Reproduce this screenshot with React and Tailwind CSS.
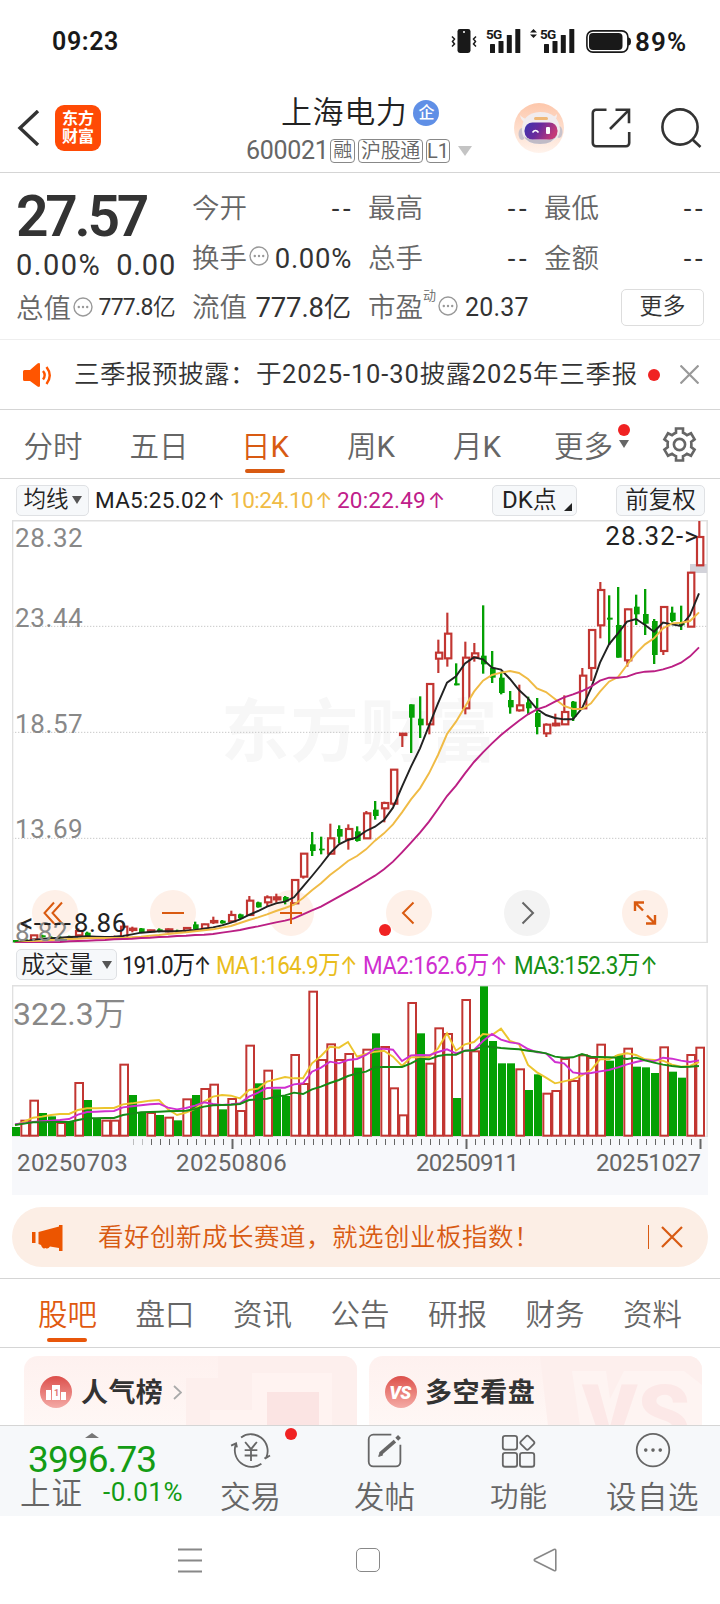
// src/pages/StockDetail.jsx
import { useState } from 'react';
import clsx from 'clsx';

const RED = '#c23632';
const GREEN = '#04a004';

// [dir, high, low, bodyTop, bodyBottom] -- y values in chart units
const CANDLES = [
  ['g', 1275, 1282, 1275, 1282], ['g', 1272, 1278, 1272, 1278], ['r', 1261, 1273, 1261, 1273], ['g', 1259, 1268, 1261, 1267],
  ['g', 1264, 1272, 1266, 1271], ['g', 1264, 1271, 1266, 1270], ['g', 1262, 1270, 1264, 1268], ['r', 1240, 1261, 1248, 1261],
  ['g', 1250, 1266, 1253, 1263], ['g', 1264, 1271, 1266, 1270], ['g', 1264, 1272, 1267, 1271], ['r', 1262, 1273, 1266, 1270],
  ['r', 1223, 1273, 1235, 1270], ['r', 1235, 1252, 1241, 1245], ['g', 1239, 1254, 1240, 1252], ['r', 1244, 1252, 1246, 1249],
  ['g', 1240, 1252, 1243, 1249], ['r', 1240, 1252, 1243, 1249], ['g', 1244, 1252, 1247, 1251], ['r', 1236, 1249, 1239, 1247],
  ['g', 1220, 1244, 1228, 1243], ['r', 1226, 1243, 1228, 1241], ['r', 1205, 1227, 1218, 1222], ['g', 1215, 1226, 1217, 1225],
  ['r', 1187, 1222, 1200, 1219], ['g', 1196, 1212, 1198, 1210], ['r', 1143, 1202, 1157, 1200], ['g', 1160, 1178, 1162, 1177],
  ['r', 1141, 1173, 1147, 1162], ['r', 1136, 1163, 1147, 1153], ['g', 1143, 1168, 1146, 1160], ['r', 1092, 1167, 1095, 1165],
  ['r', 1014, 1091, 1016, 1085], ['g', 951, 1023, 988, 1008], ['g', 965, 1018, 1001, 1005], ['r', 926, 1018, 970, 1016],
  ['g', 931, 985, 942, 965], ['r', 928, 1004, 942, 972], ['g', 934, 980, 949, 978], ['r', 888, 972, 895, 970],
  ['g', 858, 914, 884, 903], ['r', 860, 922, 864, 880], ['r', 762, 872, 764, 866], ['r', 656, 696, 656, 660],
  ['g', 568, 714, 568, 608], ['g', 544, 669, 611, 631], ['r', 505, 658, 507, 628], ['r', 374, 474, 413, 431],
  ['r', 293, 455, 356, 430], ['g', 445, 511, 505, 511], ['r', 380, 598, 428, 580], ['r', 384, 440, 415, 427],
  ['g', 271, 476, 422, 448], ['g', 408, 504, 458, 488], ['g', 470, 538, 488, 534], ['g', 528, 596, 555, 577],
  ['r', 509, 590, 571, 586], ['g', 545, 600, 562, 580], ['g', 549, 658, 594, 636], ['r', 625, 666, 629, 655],
  ['r', 596, 634, 626, 631], ['r', 541, 630, 591, 628], ['g', 558, 618, 560, 605], ['r', 459, 582, 482, 580],
  ['r', 343, 498, 345, 459], ['r', 201, 370, 225, 331], ['g', 241, 390, 308, 314], ['g', 216, 428, 330, 428],
  ['r', 281, 455, 283, 436], ['g', 239, 330, 275, 298], ['g', 222, 360, 297, 326], ['g', 312, 447, 318, 420],
  ['r', 275, 420, 276, 408], ['g', 275, 322, 293, 318], ['g', 272, 345, 325, 331], ['r', 172, 336, 173, 335],
  ['r', 18, 152, 66, 151],
];

const MA5 = [1283, 1279, 1275, 1272, 1270, 1268, 1266, 1265, 1264, 1265, 1266, 1265, 1263, 1258, 1253, 1251, 1249, 1249, 1249, 1247, 1245, 1241, 1237, 1231, 1223, 1213, 1200, 1188, 1175, 1165, 1160, 1147, 1115, 1083, 1050, 1015, 988, 975, 967, 948, 935, 915, 878, 815, 755, 700, 632, 565, 503, 484, 445, 427, 433, 458, 464, 492, 525, 550, 582, 600, 609, 613, 613, 580, 520, 443, 388, 355, 320, 312, 330, 350, 323, 328, 333, 300, 235];
const MA10 = [1284, 1282, 1280, 1278, 1275, 1274, 1272, 1271, 1269, 1269, 1269, 1269, 1269, 1267, 1265, 1262, 1260, 1257, 1254, 1252, 1249, 1246, 1243, 1238, 1233, 1224, 1215, 1207, 1198, 1188, 1179, 1169, 1149, 1126, 1105, 1080, 1060, 1038, 1023, 1003, 977, 955, 928, 892, 853, 820, 775, 720, 657, 620, 575, 530, 497, 480, 473, 468, 474, 492, 520, 531, 552, 573, 582, 582, 565, 530, 500, 486, 450, 415, 388, 370, 340, 325, 323, 318, 292];
const MA20 = [1285, 1284, 1284, 1283, 1282, 1281, 1279, 1278, 1277, 1276, 1275, 1273, 1272, 1271, 1269, 1268, 1266, 1265, 1263, 1262, 1260, 1259, 1257, 1253, 1249, 1245, 1239, 1234, 1228, 1222, 1217, 1210, 1198, 1186, 1175, 1160, 1145, 1130, 1115, 1098, 1082, 1063, 1040, 1012, 983, 953, 920, 882, 843, 812, 775, 741, 712, 685, 660, 638, 617, 598, 583, 574, 560, 547, 538, 528, 515, 497, 488, 488, 485, 475, 470, 469, 463, 455, 443, 424, 397];

// volume bar tops, same order as CANDLES
const VOLUME = [
  ['g', 561], ['r', 541], ['r', 481], ['g', 519], ['g', 529], ['r', 548], ['g', 545], ['r', 428], ['g', 480], ['g', 535],
  ['r', 541], ['r', 541], ['r', 373], ['g', 465], ['g', 517], ['r', 518], ['g', 525], ['r', 532], ['g', 541], ['r', 477],
  ['g', 465], ['r', 446], ['r', 433], ['g', 508], ['r', 476], ['r', 512], ['r', 316], ['g', 430], ['r', 391], ['g', 448],
  ['g', 468], ['r', 344], ['r', 431], ['r', 154], ['r', 359], ['r', 312], ['r', 359], ['r', 341], ['g', 383], ['r', 328],
  ['g', 280], ['r', 320], ['r', 444], ['r', 525], ['r', 188], ['g', 280], ['r', 370], ['r', 264], ['r', 281], ['g', 474],
  ['r', 179], ['r', 333], ['g', 139], ['g', 303], ['g', 370], ['g', 370], ['r', 387], ['g', 450], ['g', 403], ['r', 460],
  ['r', 452], ['r', 356], ['r', 422], ['r', 345], ['r', 353], ['r', 313], ['g', 362], ['g', 345], ['r', 325], ['g', 380],
  ['g', 382], ['g', 399], ['r', 321], ['g', 395], ['g', 413], ['r', 344], ['r', 322],
];

const VMA1 = [556, 545, 533, 530, 525, 522, 522, 510, 505, 505, 504, 504, 493, 490, 486, 482, 480, 508, 525, 518, 507, 485, 470, 465, 467, 475, 450, 446, 425, 418, 411, 415, 415, 370, 348, 320, 323, 306, 350, 342, 335, 332, 350, 378, 352, 352, 352, 325, 280, 332, 313, 306, 282, 285, 266, 303, 312, 375, 397, 413, 430, 424, 418, 406, 390, 358, 358, 345, 340, 345, 358, 360, 362, 374, 380, 378, 366];
const VMA2 = [553, 550, 546, 544, 542, 540, 537, 524, 516, 515, 514, 513, 502, 499, 496, 493, 491, 503, 508, 504, 497, 487, 492, 495, 493, 490, 470, 458, 444, 443, 443, 433, 430, 395, 383, 365, 370, 360, 357, 345, 326, 326, 329, 363, 346, 345, 346, 336, 328, 340, 332, 330, 303, 282, 299, 307, 311, 327, 337, 340, 366, 370, 397, 401, 399, 394, 390, 382, 373, 366, 360, 364, 353, 356, 362, 366, 361];
const VMA3 = [555, 551, 547, 547, 546, 546, 546, 540, 535, 535, 534, 534, 525, 521, 517, 516, 515, 514, 513, 512, 507, 500, 496, 495, 494, 492, 480, 478, 476, 470, 466, 458, 462, 448, 440, 429, 420, 408, 400, 395, 382, 381, 381, 381, 370, 356, 358, 348, 344, 344, 332, 331, 318, 321, 324, 326, 328, 332, 335, 340, 350, 353, 352, 342, 350, 351, 352, 353, 357, 353, 361, 368, 374, 378, 381, 380, 378];

const toPoints = (values) => values.map((y, i) => `${9 + 27 * i},${y}`).join(' ');

const QUOTES = [
  { label: '今开', value: '--' },
  { label: '最高', value: '--' },
  { label: '最低', value: '--' },
  { label: '换手', value: '0.00%', tip: true },
  { label: '总手', value: '--' },
  { label: '金额', value: '--' },
];

const PERIODS = ['分时', '五日', '日K', '周K', '月K'];
const SECTIONS = ['股吧', '盘口', '资讯', '公告', '研报', '财务', '资料'];

function MoreDot() {
  return (
    <svg className="h-5 w-5 shrink-0" viewBox="0 0 20 20" fill="none">
      <circle cx="10" cy="10" r="9" stroke="#999" strokeWidth="1.4" />
      <circle cx="5.8" cy="10" r="1.2" fill="#999" />
      <circle cx="10" cy="10" r="1.2" fill="#999" />
      <circle cx="14.2" cy="10" r="1.2" fill="#999" />
    </svg>
  );
}

function Up() {
  return <span className="inline-flex w-[19px] justify-center font-[Inter] text-[21px]">↑</span>;
}

function Signal({ data }) {
  return (
    <div className="relative h-6 w-[36px]">
      {data && (
        <svg className="absolute -left-[10px] top-[0px] h-[9px] w-[7px]" viewBox="0 0 7 9" fill="#191919">
          <path d="M3.5 0 7 3.6H0zM3.5 9 0 5.4h7z" />
        </svg>
      )}
      <span className="absolute -top-[1px] left-0 text-[13.5px] leading-[13px] font-bold tracking-[-0.8px]">5G</span>
      <svg className="absolute top-0 left-0 h-6 w-[36px]" viewBox="0 0 36 24" fill="#191919">
        <rect x="4" y="15" width="5" height="9" rx="0.6" />
        <rect x="12.5" y="12" width="5" height="12" rx="0.6" />
        <rect x="20.8" y="6" width="5" height="18" rx="0.6" />
        <rect x="29.3" y="0" width="5" height="24" rx="0.6" />
      </svg>
    </div>
  );
}

function StatusBar() {
  return (
    <div className="flex h-[82px] items-center pl-[52px] text-[#191919]">
      <span className="mt-[2px] w-[399px] text-[25px] font-semibold tracking-[0.6px]">09:23</span>
      <svg className="h-6 w-[26px]" viewBox="0 0 26 24" fill="#191919">
        <rect x="6.5" y="0" width="13" height="24" rx="2.4" />
        <circle cx="13" cy="3" r="1" fill="#fff" />
        <path d="M1 7.5 3.5 10 1.5 12.5 3.5 15 1 17.5M25 7.5 22.5 10l2 2.5-2 2.5 2.5 2.5" fill="none" stroke="#191919" strokeWidth="1.5" />
      </svg>
      <div className="ml-[9px]"><Signal /></div>
      <div className="ml-[18px]"><Signal data /></div>
      <svg className="mt-[1px] ml-[10px] h-[23px] w-[45px]" viewBox="0 0 45 23">
        <rect x="0.9" y="0.9" width="41" height="21.2" rx="6" fill="none" stroke="#191919" strokeWidth="1.6" />
        <rect x="3" y="3" width="33.5" height="17" rx="4" fill="#191919" />
        <path d="M42 7.5q3 0 3 4t-3 4z" fill="#191919" />
      </svg>
      <span className="mt-[3px] ml-[4px] text-[26px] font-semibold tracking-[1.2px]">89%</span>
    </div>
  );
}

function Robot() {
  return (
    <svg className="h-[50px] w-[50px]" viewBox="0 0 50 50">
      <defs>
        <linearGradient id="halo" x1="0" y1="0" x2="0" y2="1">
          <stop offset="0" stopColor="#fdc7ab" />
          <stop offset="1" stopColor="#fff3ec" />
        </linearGradient>
        <linearGradient id="visor" x1="0" y1="0" x2="1" y2="0.3">
          <stop offset="0" stopColor="#3a35b0" />
          <stop offset="0.5" stopColor="#6a2b9c" />
          <stop offset="1" stopColor="#c33a78" />
        </linearGradient>
      </defs>
      <circle cx="25" cy="25" r="25" fill="url(#halo)" />
      <ellipse cx="8" cy="31" rx="3.5" ry="6" fill="#c9c3cc" />
      <ellipse cx="45" cy="29" rx="3.5" ry="6" fill="#c9c3cc" />
      <path d="M6 12q1 6 6 8l4-4q-6 1-10-4zM43 11q0 6-5 8l-4-4q5 1 9-4z" fill="#f4eeee" />
      <path d="M8 27Q8 10 26 9q18 0 20 17 0 14-20 15Q8 41 8 27z" fill="#f1ecee" />
      <path d="M9 32q4 9 17 9t18-10q-4 6-18 6T9 32z" fill="#c0bbc6" />
      <rect x="20" y="14" width="14" height="3" rx="1.5" fill="#efb877" />
      <rect x="10.5" y="19.5" width="33" height="17" rx="8" fill="url(#visor)" />
      <path d="M18.5 29.5q3-4 6 0" fill="none" stroke="#fff" strokeWidth="1.6" />
      <rect x="32" y="24" width="4" height="7" rx="1" fill="#fff" />
    </svg>
  );
}

function Header() {
  return (
    <div className="flex h-[91px] items-start border-b border-[#d5d5d5]">
      <svg className="mt-[28px] ml-[17px] h-9 w-[23px]" viewBox="0 0 23 36" fill="none" stroke="#333" strokeWidth="3.4">
        <path d="M21 1 3 18 21 35" />
      </svg>
      <div className="mt-[23px] ml-[15px] flex h-[46px] w-[46px] flex-col items-center justify-center rounded-[9px] bg-[#ff4a05] text-[16px] leading-[18px] font-bold text-white">
        <span>东方</span>
        <span>财富</span>
      </div>
      <div className="ml-[145px] flex w-[228px] flex-col pt-[11px]">
        <div className="flex h-[40px] items-center pl-[35px]">
          <span className="text-[31px] tracking-[0.6px] text-[#222]">上海电力</span>
          <span className="-mt-[1px] ml-[6px] flex h-[26px] w-[26px] items-center justify-center rounded-full bg-[#5f8fe6] text-[16px] font-medium text-white">企</span>
        </div>
        <div className="flex h-[36px] items-center text-[#666]">
          <span className="w-[83px] text-[25px] font-normal tracking-[-0.3px]">600021</span>
          <span className="ml-[1px] flex h-[24px] w-[25px] shrink-0 items-center justify-center rounded-[4px] border border-[#888] text-[19px] tracking-[-0.3px]">融</span>
          <span className="ml-[3px] flex h-[24px] w-[65px] shrink-0 items-center justify-center rounded-[4px] border border-[#888] text-[20px] tracking-[-0.3px]">沪股通</span>
          <span className="ml-[3px] flex h-[24px] w-[24px] shrink-0 items-center justify-center rounded-[4px] border border-[#888] text-[20px] font-normal">L1</span>
          <span className="ml-[8px] border-x-[7.5px] border-t-[10px] border-x-transparent border-t-[#c4c4c4]"></span>
        </div>
      </div>
      <div className="mt-[21px] ml-[40px]"><Robot /></div>
      <svg className="mt-[26px] ml-[27px] h-[40px] w-[40px]" viewBox="0 0 40 40" fill="none" stroke="#333" strokeWidth="2.6">
        <path d="M15.5 1.8H5a3.2 3.2 0 0 0-3.2 3.2v30a3.2 3.2 0 0 0 3.2 3.2h30a3.2 3.2 0 0 0 3.2-3.2V24M24.5 1.8h13.5v13.5M37.5 2.3 19 21" />
      </svg>
      <svg className="mt-[26px] ml-[30px] h-[40px] w-[42px]" viewBox="0 0 42 40" fill="none" stroke="#333" strokeWidth="2.6">
        <circle cx="19" cy="19" r="17.6" />
        <path d="M31.5 31.5 39.5 39" />
      </svg>
    </div>
  );
}

function Quote() {
  return (
    <div className="flex h-[167px] border-b border-[#eee] pl-[16px] text-[#333]">
      <div className="flex w-[176px] flex-col">
        <span className="mt-[11px] h-[64px] text-[57px] leading-[66px] font-semibold tracking-[-3.3px]">27.57</span>
        <div className="-mt-[1px] flex h-[38px] w-[160px] items-center justify-between text-[29px] font-normal">
          <span className="tracking-[1.5px]">0.00%</span>
          <span className="tracking-[0.8px]">0.00</span>
        </div>
        <div className="mt-[4px] flex h-[39px] w-[159px] items-center">
          <span className="text-[27.5px] text-[#666]">总值</span>
          <span className="-mt-1 ml-[2px]"><MoreDot /></span>
          <span className="ml-auto text-[23px] tracking-[-0.7px]"><span className="font-normal">777.8</span>亿</span>
        </div>
      </div>
      <div>
        <div className="grid grid-cols-[158px_158px_158px] gap-x-[18px] pt-[11px]">
          {QUOTES.map((q) => (
            <div key={q.label} className="flex h-[49.5px] items-center text-[27.5px]">
              <span className="text-[#666]">{q.label}</span>
              {q.tip && <span className="-mt-1 ml-[2px]"><MoreDot /></span>}
              <span className={clsx('ml-auto font-normal', q.value === '--' ? 'tracking-[3.5px] -mr-1' : '-mr-[2px] tracking-[0.7px]')}>{q.value}</span>
            </div>
          ))}
        </div>
        <div className="flex h-[49px] items-center text-[27.5px]">
          <div className="flex w-[159px] items-center justify-between">
            <span className="text-[#666]">流值</span>
            <span className="tracking-[-0.2px]"><span className="font-normal">777.8</span>亿</span>
          </div>
          <span className="ml-[17px] text-[#666]">市盈</span>
          <span className="-mt-[24px] text-[13px] text-[#666]">动</span>
          <span className="-mt-1 ml-[2px]"><MoreDot /></span>
          <span className="ml-[7px] text-[25px] font-normal tracking-[0.2px]">20.37</span>
          <button className="-mr-[2px] ml-auto h-[37px] w-[83px] rounded-[5px] border border-[#ddd] text-[23px]">更多</button>
        </div>
      </div>
    </div>
  );
}

function Notice() {
  return (
    <div className="flex h-[70px] items-center border-b border-[#d5d5d5] pl-[22px]">
      <svg className="h-6 w-[30px]" viewBox="0 0 30 24" fill="#ff5500">
        <path d="M1 8.5q0-1.5 1.5-1.5H8L15.5.5Q18-.8 18 1.5v21q0 2.3-2.5 1L8 18H2.5Q1 18 1 16.5z" />
        <path d="M21 8q3.4 4 0 8.5M24.5 4q6.5 8.5 0 17" fill="none" stroke="#ff5500" strokeWidth="2.4" />
      </svg>
      <div className="ml-[22px] flex w-[564px] text-[25.5px] whitespace-nowrap text-[#333]">
        <span className="tracking-[0.5px]">三季报预披露：于</span>
        <span className="font-normal tracking-[0.9px]">2025-10-30</span>
        <span className="tracking-[0.5px]">披露</span>
        <span className="font-normal tracking-[1px]">2025</span>
        <span className="tracking-[0.7px]">年三季报</span>
      </div>
      <span className="ml-[10px] h-3 w-3 rounded-full bg-[#f02222]"></span>
      <svg className="ml-[20px] h-[19px] w-[19px]" viewBox="0 0 19 19" stroke="#999" strokeWidth="2.2">
        <path d="M.5.5l18 18M18.5.5l-18 18" />
      </svg>
    </div>
  );
}

function PeriodTabs({ period, setPeriod }) {
  return (
    <div className="flex h-[69px] items-center border-b border-[#d5d5d5] pl-[23px] text-[29.5px] text-[#666]">
      {PERIODS.map((p) => (
        <button
          key={p}
          onClick={() => setPeriod(p)}
          className={clsx('relative h-full w-[60px] text-center pt-[6px] whitespace-nowrap mr-[46px]', p === period && 'text-[#d85a12]')}
        >
          {p.replace('K', '')}
          {p.endsWith('K') && <span className="font-normal">K</span>}
          {p === period && <span className="absolute bottom-[5px] left-[10px] h-1 w-[40px] rounded-full bg-[#d85a12]"></span>}
        </button>
      ))}
      <span className="relative flex h-full w-[78px] items-center pt-[6px] pl-[1px]">
        更多
        <span className="absolute top-[14px] left-[65px] h-3 w-3 rounded-full bg-[#f02222]"></span>
        <span className="absolute top-[30px] left-[66px] border-x-[5px] border-t-[8px] border-x-transparent border-t-[#666]"></span>
      </span>
      <svg className="ml-[31px] h-[35px] w-[35px] shrink-0" viewBox="0 0 35 35" fill="none" stroke="#666" strokeWidth="2.6">
        <path d="M14 1.5h7v4.3q2.2.8 4 2.4l4-1.9 3.6 6-3.4 2.6q.4 2.6 0 5.2l3.4 2.6-3.6 6-4-1.9q-1.8 1.6-4 2.4v4.3h-7v-4.3q-2.2-.8-4-2.4l-4 1.9-3.6-6 3.4-2.6q-.4-2.6 0-5.2L2.4 12.3l3.6-6 4 1.9q1.8-1.6 4-2.4z" />
        <circle cx="17.5" cy="17.5" r="5.6" />
      </svg>
    </div>
  );
}

function PriceChart() {
  return (
    <div className="relative ml-3 h-[423px] w-[696px]">
      <div className="absolute top-[173px] left-[209px] text-[68px] leading-[80px] font-bold tracking-[1.5px] text-[#f7f7f7]">东方财富</div>
      {/* chart buttons */}
      <div className="absolute top-[370px] left-[20px] flex gap-[72px]">
        {['back', 'minus', 'plus', 'left', 'right', 'expand'].map((name) => (
          <span key={name} className={clsx('h-[46px] w-[46px] rounded-full', name === 'right' ? 'bg-[#f3f3f3]' : 'bg-[#fef0e8]')}></span>
        ))}
      </div>
      <svg className="absolute inset-0 h-[423px] w-[696px]" viewBox="0 15 2088 1269" fill="none">
        {[334, 652, 970].map((y) => (
          <line key={y} x1="0" x2="2088" y1={y} y2={y} stroke="#c8c8c8" strokeWidth="3" strokeDasharray="4 5" />
        ))}
        <rect x="1.5" y="17" width="2084" height="1266" stroke="#e0e0e0" strokeWidth="5" />
        <rect x="2034" y="147" width="51" height="27" fill="#d3d3da" />
        {CANDLES.map(([dir, high, low, top, bottom], i) => {
          const x = 11 + 27 * i;
          if (dir === 'g') {
            return (
              <g key={i} fill={GREEN}>
                <rect x={x - 5} y={high} width="7" height={low - high} />
                <rect x={x - 8} y={top} width="17" height={Math.max(bottom - top, 5)} />
              </g>
            );
          }
          return (
            <g key={i} stroke={RED} strokeWidth="6.5">
              <line x1={x - 1} x2={x - 1} y1={high} y2={top} />
              <line x1={x - 1} x2={x - 1} y1={bottom} y2={low} />
              <rect x={x - 8} y={top} width="19" height={bottom - top} />
            </g>
          );
        })}
        <polyline points={toPoints(MA5)} stroke="#222" strokeWidth="5.8" />
        <polyline points={toPoints(MA10)} stroke="#f0bb45" strokeWidth="5.8" />
        <polyline points={toPoints(MA20)} stroke="#bb1f84" strokeWidth="5.8" />
      </svg>
      <svg className="absolute top-[370px] left-[20px] h-[46px] w-[636px]" viewBox="0 0 636 46" fill="none" stroke="#d95a10" strokeWidth="2">
        <path d="M22 12.5 12.5 23 22 33.5M30 12.5 20.5 23 30 33.5" />
        <path d="M130 23h22" />
        <path d="M248 23h22M259 12v22" />
        <path d="M381.5 12.5 371 23l10.5 10.5" />
        <path d="M490.5 12.5 501 23l-10.5 10.5" stroke="#666" />
        <path d="M603 21v-8.5h9M603 12.5l8 8M623 25v8.5h-9M623 33.5l-8-8" strokeWidth="2.4" />
      </svg>
      <span className="absolute top-[404px] left-[367px] h-3 w-3 rounded-full bg-[#f02222]"></span>
      <div className="absolute inset-0 text-[26px] leading-[30px] font-normal tracking-[0.6px] text-[#888]">
        <span className="absolute top-[3px] left-[3px]">28.32</span>
        <span className="absolute top-[83px] left-[3px]">23.44</span>
        <span className="absolute top-[189px] left-[3px]">18.57</span>
        <span className="absolute top-[294px] left-[3px]">13.69</span>
        <span className="absolute top-[397px] left-[3px]">8.82</span>
        <span className="absolute top-[388px] left-[8px] text-[#222]">&lt;<span className="tracking-[2.8px]">----</span>8.86</span>
        <span className="absolute top-[1px] right-[9px] tracking-[1.1px] text-[#222]">28.32-&gt;</span>
      </div>
    </div>
  );
}

function VolumeChart() {
  return (
    <div className="ml-3 w-[696px]">
      <div className="relative h-[152px]">
        <svg className="absolute inset-0 h-[152px] w-[696px]" viewBox="0 135 2088 456" fill="none">
          <rect x="1.5" y="137" width="2084" height="452" stroke="#e0e0e0" strokeWidth="5" />
          {VOLUME.map(([dir, top], i) => {
            const x = 12 + 27 * i;
            return dir === 'g' ? (
              <rect key={i} x={x - 12} y={top} width="24" height={588 - top} fill={GREEN} />
            ) : (
              <rect key={i} x={x - 11} y={top + 1} width="23" height={586 - top} stroke={RED} strokeWidth="6" />
            );
          })}
          <polyline points={toPoints(VMA1)} stroke="#ecc52e" strokeWidth="5.8" />
          <polyline points={toPoints(VMA2)} stroke="#cf2fd0" strokeWidth="5.8" />
          <polyline points={toPoints(VMA3)} stroke="#158a15" strokeWidth="5.8" />
        </svg>
        <span className="absolute top-[11px] left-[1px] text-[32px] leading-[36px] tracking-[0.1px] text-[#888]"><span className="font-normal">322.3</span>万</span>
      </div>
      <div className="h-[58px] bg-[#f7f8fb]">
        <svg className="block h-3 w-[696px]" viewBox="0 0 696 12" fill="#666">
          {Array.from({ length: 64 }, (_, k) => k + 13).map((i) => {
            const major = i === 24 || i === 50 || i === 76;
            return <rect key={i} x={major ? 3.5 + 9 * i : 4 + 9 * i} y="2" width={major ? 2 : 1} height={major ? 10 : 6} opacity={i < 15 ? 0.4 : 1} />;
          })}
        </svg>
        <div className="-mt-[2px] flex h-8 items-center text-[24px] font-normal tracking-[0.4px] text-[#666]">
          <span className="ml-[5px] w-[159px]">20250703</span>
          <span className="w-[240px]">20250806</span>
          <span className="w-[180px] tracking-[-0.7px]">20250911</span>
          <span className="tracking-[-0.4px]">20251027</span>
        </div>
      </div>
    </div>
  );
}

function Cards() {
  return (
    <div className="flex h-[77px] gap-3 overflow-hidden pt-2 pl-6">
      <div className="relative flex h-[90px] w-[333px] overflow-hidden rounded-t-[14px] bg-linear-to-b from-[#fef1ef] to-[#fff9f7] pt-[20px] pl-4">
        <svg className="absolute top-0 left-[162px] h-[70px] w-[171px]" viewBox="0 0 171 70">
          <path d="M32 0h139v70H0V22h32z" fill="#fdefed" />
          <path d="M66 17h80v53H24V54h42z" fill="#fff3f1" />
          <rect x="81" y="36" width="52" height="34" fill="#fbe4e3" />
        </svg>
        <svg className="relative h-8 w-8" viewBox="0 0 32 32">
          <defs>
            <linearGradient id="badge" x1="0" y1="0" x2="0" y2="1">
              <stop offset="0" stopColor="#dc4f4b" />
              <stop offset="1" stopColor="#f4aaa6" />
            </linearGradient>
          </defs>
          <circle cx="16" cy="16" r="16" fill="url(#badge)" />
          <path d="M6 14h5v10H6zM12 9h8v15h-8zM21 16h5v8h-5z" fill="#fff" />
          <text x="14" y="19.5" fontSize="9" fontWeight="700" fill="#e07773">1</text>
        </svg>
        <span className="relative ml-[9px] text-[27px] leading-[34px] font-bold tracking-[0.4px] text-[#333]">人气榜</span>
        <svg className="relative mt-[9px] ml-[10px] h-[15px] w-[9px]" viewBox="0 0 9 15" fill="none" stroke="#aaa" strokeWidth="1.8">
          <path d="M1 1l7 6.5L1 14" />
        </svg>
      </div>
      <div className="relative flex h-[90px] w-[333px] overflow-hidden rounded-t-[14px] bg-linear-to-b from-[#fef1ef] to-[#fff9f7] pt-[20px] pl-4">
        <svg className="absolute top-0 left-[171px] h-[70px] w-[162px]" viewBox="0 0 162 70">
          <path d="M0 0h162v70H8z" fill="#fdefed" />
          <path d="M32 15h34l4 28 14-28h60l18 14v41H40z" fill="#fef4f2" />
          <text x="42" y="88" fontSize="84" fontWeight="900" fill="#fce8e7">VS</text>
        </svg>
        <span className="relative flex h-8 w-8 items-center justify-center rounded-full bg-linear-to-b from-[#dc4f4b] to-[#f4aaa6] pr-[2px] text-[18px] font-black tracking-[-0.5px] text-white italic">VS</span>
        <span className="relative ml-[8px] text-[27px] leading-[34px] font-bold tracking-[0.6px] text-[#333]">多空看盘</span>
      </div>
    </div>
  );
}

function BottomBar() {
  return (
    <div className="flex h-[91px] border-t border-[#d5d5d5] bg-[#f6f8fa] text-[30.5px] text-[#666]">
      <div className="relative w-[216px]">
        <span className="absolute top-[7px] left-[85px] border-x-[7px] border-b-[5px] border-x-transparent border-b-[#777]"></span>
        <div className="mt-[14px] ml-[28px] h-[39px] text-[37px] leading-[40px] font-normal tracking-[-0.9px] text-[#149c14]">3996.73</div>
        <div className="mt-[1px] ml-[20px] flex h-[28px] items-center">
          <span className="tracking-[1px]">上证</span>
          <span className="-mt-[3px] ml-[20px] text-[26px] font-normal tracking-[0.5px] text-[#149c14]">-0.01%</span>
        </div>
      </div>
      <div className="relative flex w-[69px] flex-col items-center pt-[6px]">
        <svg className="h-[42px] w-[46px]" viewBox="0 0 46 42" fill="none" stroke="#666" strokeWidth="2">
          <path d="M12 6A18.5 18.5 0 0 1 40 28M38 28l1 1 5-3M34.5 35A18.5 18.5 0 0 1 6.5 13M1 15l5.5-2.5L7.5 17" />
          <path d="M16.5 11l6.5 8 6.5-8M23 19v13M16 20h14M16 26h14" />
        </svg>
        <span className="mt-[10px] leading-[36px] whitespace-nowrap">交易</span>
        <span className="absolute top-[2px] left-[69px] h-3 w-3 rounded-full bg-[#f02222]"></span>
      </div>
      <div className="ml-[65px] flex w-[69px] flex-col items-center pt-[6px]">
        <svg className="h-[42px] w-[42px]" viewBox="0 0 42 42" fill="none" stroke="#666" strokeWidth="2">
          <path d="M28 3H8a5 5 0 0 0-5 5v25a5 5 0 0 0 5 5h25a5 5 0 0 0 5-5V14" />
          <path d="M16 24 32 10" strokeWidth="4" />
          <path d="M34 8l3-3" strokeWidth="4.5" />
          <path d="M14 27l1.5-4.5 3 3z" fill="#666" strokeWidth="1" />
        </svg>
        <span className="mt-[10px] leading-[36px] whitespace-nowrap">发帖</span>
      </div>
      <div className="ml-[65px] flex w-[69px] flex-col items-center pt-[6px]">
        <svg className="h-[42px] w-[42px]" viewBox="0 0 42 42" fill="none" stroke="#666" strokeWidth="1.9">
          <rect x="4" y="4" width="15" height="14.5" rx="2.5" />
          <rect x="4" y="22" width="15" height="14.5" rx="2.5" />
          <rect x="22" y="22" width="15" height="14.5" rx="2.5" />
          <rect x="24" y="5.5" width="11.5" height="11.5" rx="2" transform="rotate(45 29.75 11.25)" />
        </svg>
        <span className="mt-[8px] text-[28.5px] leading-[36px] whitespace-nowrap">功能</span>
      </div>
      <div className="ml-[51px] flex w-[97px] flex-col items-center pt-[6px]">
        <svg className="h-[42px] w-[42px]" viewBox="0 0 42 42" fill="none" stroke="#666" strokeWidth="2">
          <circle cx="21" cy="20" r="18" />
          <g fill="#666" stroke="none">
            <circle cx="13" cy="20" r="2" />
            <circle cx="21" cy="20" r="2" />
            <circle cx="29" cy="20" r="2" />
          </g>
        </svg>
        <span className="mt-[10px] leading-[36px] tracking-[0.5px] whitespace-nowrap">设自选</span>
      </div>
    </div>
  );
}

function App() {
  const [period, setPeriod] = useState('日K');
  const [section, setSection] = useState('股吧');

  return (
    <div className="h-[1604px] w-[720px] overflow-hidden bg-white font-[Roboto,'Noto_Sans_CJK_SC',sans-serif] font-[350]">
      <StatusBar />
      <Header />
      <Quote />
      <Notice />
      <PeriodTabs period={period} setPeriod={setPeriod} />

      {/* moving averages */}
      <div className="flex h-[41px] items-center pt-[1px] pl-4 text-[22.5px] whitespace-nowrap text-[#222]">
        <button className="flex h-[31px] w-[73px] items-center justify-center rounded-[5px] border border-[#dfe1e4] bg-[#f6f8fa]">
          均线
          <span className="ml-[3px] border-x-[5px] border-t-[8px] border-x-transparent border-t-[#555]"></span>
        </button>
        <div className="mt-[2px] flex font-normal">
          <span className="ml-[6px] flex w-[131px] items-center justify-between tracking-[0.3px]">MA5:25.02<Up /></span>
          <span className="ml-[4px] flex w-[103px] items-center justify-between tracking-[-0.5px] text-[#f0bb45]">10:24.10<Up /></span>
          <span className="ml-[4px] flex w-[109px] items-center justify-between tracking-[0.2px] text-[#c0208a]">20:22.49<Up /></span>
        </div>
        <button className="relative ml-[46px] h-[31px] w-[85px] rounded-[5px] border border-[#dfe1e4] bg-[#f6f8fa] pl-[9px] text-left text-[24px] leading-[29px]">
          <span className="font-normal">DK</span>点
          <span className="absolute right-[4px] bottom-[4px] border-b-[8px] border-l-[8px] border-b-[#222] border-l-transparent"></span>
        </button>
        <button className="ml-[39px] h-[31px] w-[89px] rounded-[5px] border border-[#dfe1e4] bg-[#f6f8fa] text-[23.5px] leading-[29px]">前复权</button>
      </div>

      <PriceChart />

      <div className="flex h-[42px] items-center pl-4 text-[22.5px] whitespace-nowrap text-[#222]">
        <button className="flex h-[31px] w-[101px] items-center justify-center rounded-[5px] border border-[#dfe1e4] bg-[#f6f8fa] pt-[2px] text-[24px]">
          成交量
          <span className="ml-[9px] border-x-[5px] border-t-[8px] border-x-transparent border-t-[#555]"></span>
        </button>
        <div className="mt-[3px] flex origin-center scale-y-[1.18] items-center font-normal">
          <span className="ml-[5px] flex w-[88px] items-center justify-between tracking-[-1.2px]">191.0万<Up /></span>
          <span className="ml-[6px] flex w-[141px] items-center justify-between tracking-[-0.8px] text-[#e9bd1c]">MA1:164.9万<Up /></span>
          <span className="ml-[6px] flex w-[145px] items-center justify-between tracking-[-0.6px] text-[#cf2fd0]">MA2:162.6万<Up /></span>
          <span className="ml-[6px] flex w-[144px] items-center justify-between tracking-[-0.6px] text-[#158f15]">MA3:152.3万<Up /></span>
        </div>
      </div>

      <VolumeChart />

      <div className="mt-3 ml-3 flex h-[60px] w-[696px] items-center rounded-full bg-[#fceee5] pl-5 text-[#d85a12]">
        <svg className="h-[27px] w-[31px]" viewBox="0 0 31 27" fill="#ec5500">
          <path d="M0 8h3.5v11H0zM6.5 8 27 2.5V1h3.5v26H27v-3l-9-1.5q-2 3-4.5 1.5-3 1.5-4.5-3l-2.5-1z" />
        </svg>
        <span className="ml-[35px] w-[550px] text-[25.5px] tracking-[0.5px]">看好创新成长赛道，就选创业板指数！</span>
        <span className="h-6 w-px bg-[#d85a12]"></span>
        <svg className="ml-[12px] h-[22px] w-[22px]" viewBox="0 0 22 22" stroke="#d85a12" strokeWidth="2.2">
          <path d="M1 1l20 20M21 1 1 21" />
        </svg>
      </div>

      <div className="mt-[11px] flex h-[70px] items-center justify-between border-y border-[#d5d5d5] pr-[38px] pl-[38px] text-[29.5px] text-[#666]">
        {SECTIONS.map((s) => (
          <button key={s} onClick={() => setSection(s)} className={clsx('relative h-full pt-[5px]', s === section && 'text-[#e05a10]')}>
            {s}
            {s === section && <span className="absolute bottom-[5px] left-[9px] h-1 w-[40px] rounded-full bg-[#e8560a]"></span>}
          </button>
        ))}
      </div>

      <Cards />
      <BottomBar />

      {/* system navigation */}
      <div className="flex h-[88px] items-center">
        <svg className="ml-[178px] h-[25px] w-6" viewBox="0 0 24 25" stroke="#888" strokeWidth="1.8">
          <path d="M0 1.5h24M0 12.5h24M0 23.5h24" />
        </svg>
        <span className="ml-[154px] h-6 w-6 rounded-[5px] border-[1.5px] border-[#888]"></span>
        <svg className="ml-[153px] h-6 w-6" viewBox="0 0 24 24" fill="none" stroke="#888" strokeWidth="1.6">
          <path d="M21 1.5 2 11q-1.5 1 0 2L21 22.5q1.8.8 1.8-1V2.5q0-1.8-1.8-1z" />
        </svg>
      </div>
    </div>
  );
}

export default App;
